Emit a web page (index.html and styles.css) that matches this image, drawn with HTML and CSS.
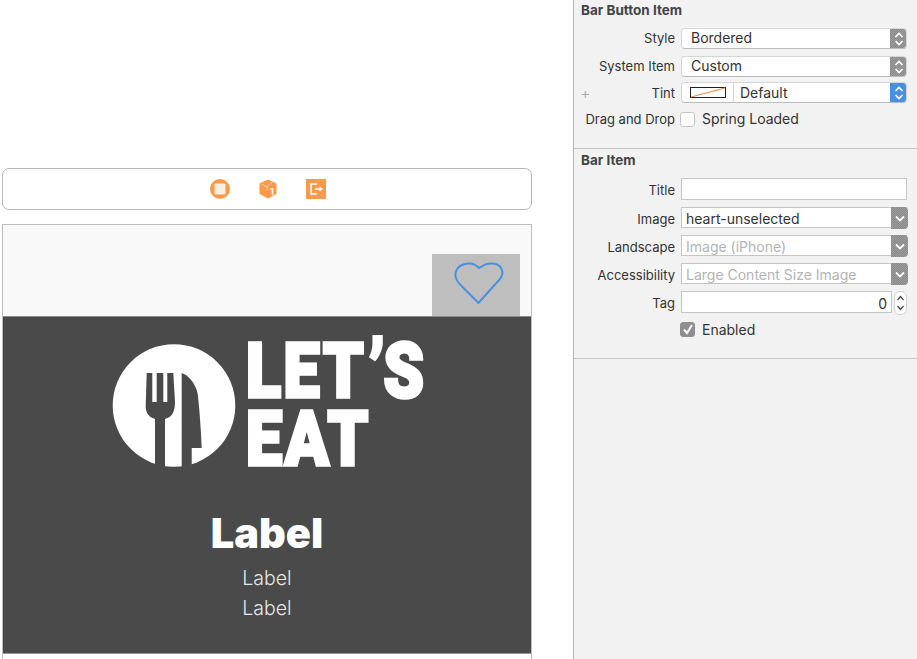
FILE: index.html
```html
<html>
    <head>
        <title>Bar Button Item</title>
        <link rel="stylesheet" href="styles.css">
    </head>
    <body>
        <svg class="defs" width="0" height="0">
            <symbol id="updown" viewBox="0 0 18 22">
                <path d="M5.5 9 9 5.5 12.500 9M5.500 13 9 16.500 12.500 13" fill="none" stroke="#fff" stroke-width="1.600"/>
            </symbol>
            <symbol id="down" viewBox="0 0 18 22">
                <path d="M5 9.500 9 13.500 13 9.500" fill="none" stroke="#fff" stroke-width="1.800"/>
            </symbol>
        </svg>
        <main class="canvas">
            <div class="toolbar">
                <svg class="tool" width="20" height="20" viewBox="0 0 20 20">
                    <circle cx="10" cy="10" r="10" fill="#fd9a4a"/>
                    <rect x="4.500" y="4.500" width="11" height="11" rx="1.500" fill="#fbeee2"/>
                </svg>
                <svg class="tool" width="20" height="20" viewBox="0 0 20 20">
                    <path d="M10 0.500 18.500 4.500V15L10 19.500 1.500 15V4.500Z" fill="#fd9a4a"/>
                    <path d="M3.500 5 9 8M9 8V11M14 3.500 9 8" fill="none" stroke="#fde3cb" stroke-width="0.800"/>
                    <text class="cube-num" x="12" y="16">1</text>
                </svg>
                <svg class="tool" width="20" height="20" viewBox="0 0 20 20">
                    <rect width="20" height="20" fill="#fd9a4a"/>
                    <path d="M11 5H5V15H11" fill="none" stroke="#fff" stroke-width="1.500"/>
                    <path d="M9 10H14" stroke="#fff" stroke-width="1.500"/>
                    <path d="M13.500 7.500 17 10 13.500 12.500Z" fill="#fff"/>
                </svg>
            </div>
            <section class="scene">
                <div class="navbar">
                    <div class="bar-button">
                        <svg width="50" height="42" viewBox="0 0 50 42">
                            <path d="M25 6C21 1.500 15 0.800 10 2.200 3.500 4 1 9.500 1.500 14 2 18 5 21.500 8 24.500L24.500 41 41 22.500C44.500 19 48.800 15.500 48.500 10.500 48 5 44 2 39 1.500 33 1 29 3 25 6Z" fill="none" stroke="#4a90e2" stroke-width="2"/>
                        </svg>
                    </div>
                </div>
                <div class="card">
                    <div class="logo">
                        <svg class="logo-mark" width="130" height="135" viewBox="0 0 130 135">
                            <circle cx="64" cy="65.500" r="61.300" fill="#fff"/>
                            <!-- fork -->
                            <path d="M36.700 33H42.300V62H46.700V33H53.300V62H57.300V33H63.300L65 62C65 72 62 77 55 79V132H45V79C38 77 35.700 72 35.700 66Z" fill="#4a4a4a"/>
                            <!-- knife -->
                            <path d="M71.700 33 76 35C84 42 87 48 88 56 90 75 91 92 91.700 108H81.700V132H71.700Z" fill="#4a4a4a"/>
                        </svg>
                        <div class="logo-type">
                            <span class="lets">LET<span class="apos">’</span>S</span>
                            <span class="eat">EAT</span>
                        </div>
                    </div>
                    <h1 class="card-title">Label</h1>
                    <p class="card-line">Label</p>
                    <p class="card-line">Label</p>
                </div>
            </section>
        </main>
        <aside class="inspector">
            <section class="group first">
                <h2>Bar Button Item</h2>
                <div class="row row-style">
                    <label>Style</label>
                    <div class="popup"><span>Bordered</span><i class="cap"><svg width="18" height="22"><use href="#updown"/></svg></i></div>
                </div>
                <div class="row row-system">
                    <label>System Item</label>
                    <div class="popup"><span>Custom</span><i class="cap"><svg width="18" height="22"><use href="#updown"/></svg></i></div>
                </div>
                <div class="row row-tint">
                    <b class="plus">+</b>
                    <label>Tint</label>
                    <div class="popup tint">
                        <span class="well"><svg width="36" height="11" viewBox="0 0 36 11"><rect x="0.500" y="0.500" width="35" height="10" fill="#fff" stroke="#222"/><path d="M1 10 35 1" stroke="#f0883e"/></svg></span>
                        <span>Default</span>
                        <i class="cap blue"><svg width="18" height="22"><use href="#updown"/></svg></i>
                    </div>
                </div>
                <div class="row row-drag">
                    <label>Drag and Drop</label>
                    <div class="check"><i class="box"></i><span>Spring Loaded</span></div>
                </div>
            </section>
            <section class="group">
                <h2>Bar Item</h2>
                <div class="row row-title">
                    <label>Title</label>
                    <div class="field"></div>
                </div>
                <div class="row row-img">
                    <label>Image</label>
                    <div class="combo"><span>heart-unselected</span><i class="cap"><svg width="18" height="22"><use href="#down"/></svg></i></div>
                </div>
                <div class="row row-img">
                    <label>Landscape</label>
                    <div class="combo muted"><span>Image (iPhone)</span><i class="cap"><svg width="18" height="22"><use href="#down"/></svg></i></div>
                </div>
                <div class="row row-img">
                    <label>Accessibility</label>
                    <div class="combo muted"><span>Large Content Size Image</span><i class="cap"><svg width="18" height="22"><use href="#down"/></svg></i></div>
                </div>
                <div class="row row-tag">
                    <label>Tag</label>
                    <div class="tag-wrap">
                        <div class="field num">0</div>
                        <div class="stepper"><svg width="13" height="24" viewBox="0 0 13 24"><path d="M3.500 9 6.500 5.500 9.500 9M3.500 15 6.500 18.500 9.500 15" fill="none" stroke="#444" stroke-width="1.200"/></svg></div>
                    </div>
                </div>
                <div class="row row-enabled">
                    <label></label>
                    <div class="check"><i class="box on"><svg width="14" height="14" viewBox="0 0 14 14"><path d="M3 7.500 6 11 11 3" fill="none" stroke="#fff" stroke-width="2"/></svg></i><span>Enabled</span></div>
                </div>
            </section>
        </aside>
    </body>
</html>
```

FILE: styles.css
```css
body {
    margin: 0;
    width: 917px;
    height: 659px;
    overflow: hidden;
    display: flex;
    background: #fff;
    font-family: Inter, "Liberation Sans", sans-serif;
    color: #333;
}
.defs {
    display: none;
}
.canvas {
    width: 573px;
    height: 659px;
    flex: none;
    padding: 168px 41px 0 2px;
    box-sizing: border-box;
}
.toolbar {
    height: 42px;
    box-sizing: border-box;
    border: 1px solid #b8b8b8;
    border-radius: 7px;
    display: flex;
    justify-content: center;
    align-items: center;
    gap: 28px;
    padding-left: 2px;
    margin-bottom: 14px;
}
.cube-num {
    font-size: 9px;
    font-weight: 700;
    fill: #fff;
}
.scene {
    height: 435px;
    box-sizing: border-box;
    border: 1px solid #bdbdbd;
    border-bottom: none;
}
.navbar {
    height: 91px;
    box-sizing: border-box;
    display: flex;
    justify-content: flex-end;
    align-items: flex-end;
    padding-right: 11px;
    background: repeating-conic-gradient(#f7f7f7 0 25%, #fbfbfb 0 50%) 0 0 / 2px 2px;
}
.bar-button {
    width: 88px;
    height: 62px;
    box-sizing: border-box;
    display: flex;
    padding: 8px 0 0 22px;
    background: repeating-conic-gradient(#bcbcbc 0 25%, #c0c0c0 0 50%) 0 0 / 2px 2px;
}
.card {
    height: 338px;
    background: #4a4a4a;
    border-top: 1px solid #8a8a8a;
    border-bottom: 1px solid #999;
    box-sizing: border-box;
    color: #fff;
    text-align: center;
}
.logo {
    display: flex;
    height: 147px;
    padding: 23px 0 0 107px;
    box-sizing: border-box;
    text-align: left;
}
.logo-mark {
    flex: none;
}
.logo-type {
    margin-left: 6px;
    margin-top: -3px;
    font-family: Roboto, sans-serif;
    font-weight: 900;
    font-size: 76px;
    line-height: 68px;
    letter-spacing: 3px;
    -webkit-text-stroke: 3.500px #fff;
}
.lets, .eat {
    display: block;
    transform-origin: left center;
    white-space: nowrap;
    transform: scaleX(0.85);
}
.apos {
    font-size: 100px;
    line-height: 0;
    letter-spacing: -4px;
    vertical-align: -13px;
    -webkit-text-stroke: 0;
}
.card-title {
    margin: 46px 0 0;
    font-size: 41.500px;
    line-height: 46px;
    font-weight: 900;
}
.card-line {
    margin: 12px 0 0;
    font-size: 19.500px;
    line-height: 21px;
    font-weight: 300;
    color: #e6e6e6;
}
.card-line + .card-line {
    margin-top: 9px;
}
.inspector {
    flex: 1;
    background: #f2f2f2;
    border-left: 1px solid #b4b4b4;
    font-size: 13px;
}
.group {
    position: relative;
    border-bottom: 1px solid #c4c4c4;
    padding-left: 6px;
    box-sizing: border-box;
}
.group.first {
    height: 149px;
}
.group:not(.first) {
    height: 210px;
}
h2 {
    margin: 0;
    padding: 3px 0 0 1px;
    font-size: 13.500px;
    line-height: 15px;
    font-weight: 700;
    color: #444;
}
.group:not(.first) h2 {
    padding-top: 4px;
}
.row {
    display: flex;
    align-items: center;
    gap: 6px;
    height: 21px;
    margin-right: 10px;
}
.row label {
    width: 95px;
    flex: none;
    text-align: right;
    white-space: nowrap;
}
.row-style label, .row-style .popup span,
.row-system label, .row-system .popup span,
.row-drag label, .row-drag .check span {
    padding-bottom: 2px;
}
.row-title label, .row-img label, .row-tag label, .combo span, .num {
    padding-top: 2px;
}
.row-style {
    margin-top: 10px;
}
.row-system {
    margin-top: 7px;
}
.row-tint {
    margin-top: 5px;
    position: relative;
}
.row-drag {
    margin-top: 6px;
}
.plus {
    position: absolute;
    left: 0;
    top: 1px;
    font-weight: 300;
    font-size: 16px;
    color: #aaa;
}
.popup, .combo, .field {
    flex: 1;
    height: 100%;
    display: flex;
    align-items: center;
    box-sizing: border-box;
    background: #fff;
    font-size: 14px;
    color: #333;
}
.popup {
    border: 1px solid #d6d6d6;
    border-bottom-color: #bcbcbc;
    border-radius: 4px;
    padding-left: 9px;
    overflow: hidden;
    justify-content: space-between;
}
.combo {
    border: 1px solid #c6c6c6;
    padding-left: 4px;
    justify-content: space-between;
}
.field {
    border: 1px solid #c6c6c6;
}
.cap {
    display: block;
    width: 17px;
    height: 22px;
    flex: none;
    background: repeating-conic-gradient(#8a8a8a 0 25%, #9c9c9c 0 50%) 0 0 / 2px 2px;
    margin: -1px -1px -1px 0;
}
.combo .cap {
    margin-right: -2px;
    border-radius: 0 4px 4px 0;
}
.cap svg {
    display: block;
}
.cap.blue {
    background: #4a90e2;
}
.tint {
    padding-left: 0;
}
.well {
    width: 51px;
    height: 100%;
    flex: none;
    display: flex;
    align-items: center;
    justify-content: center;
    border-right: 1px solid #d6d6d6;
    margin-right: 6px;
}
.tint span:nth-child(2) {
    flex: 1;
}
.muted {
    color: #b4b4b4;
}
.check {
    display: flex;
    align-items: center;
    gap: 7px;
    font-size: 14px;
    margin-left: -1px;
}
.box {
    display: block;
    width: 15px;
    height: 15px;
    box-sizing: border-box;
    border: 1px solid #c6c6c6;
    border-radius: 3px;
    background: #fff;
}
.box.on {
    background: #8e8e8e;
    border-color: #8e8e8e;
}
.box.on svg {
    display: block;
    margin: -0.500px;
}
.row-title {
    margin-top: 10px;
    height: 22px;
}
.row-img {
    margin-top: 7px;
}
.row-tag {
    margin-top: 7px;
    height: 22px;
}
.tag-wrap {
    flex: 1;
    height: 100%;
    display: flex;
    gap: 2px;
}
.num {
    justify-content: flex-end;
    padding-right: 4px;
}
.stepper {
    width: 13px;
    height: 24px;
    box-sizing: border-box;
    background: #fff;
    border-radius: 6px;
    border: 1px solid #d2d2d2;
}
.stepper svg {
    display: block;
    margin: -1px;
}
.row-enabled {
    margin-top: 7px;
    height: 18px;
}
```
